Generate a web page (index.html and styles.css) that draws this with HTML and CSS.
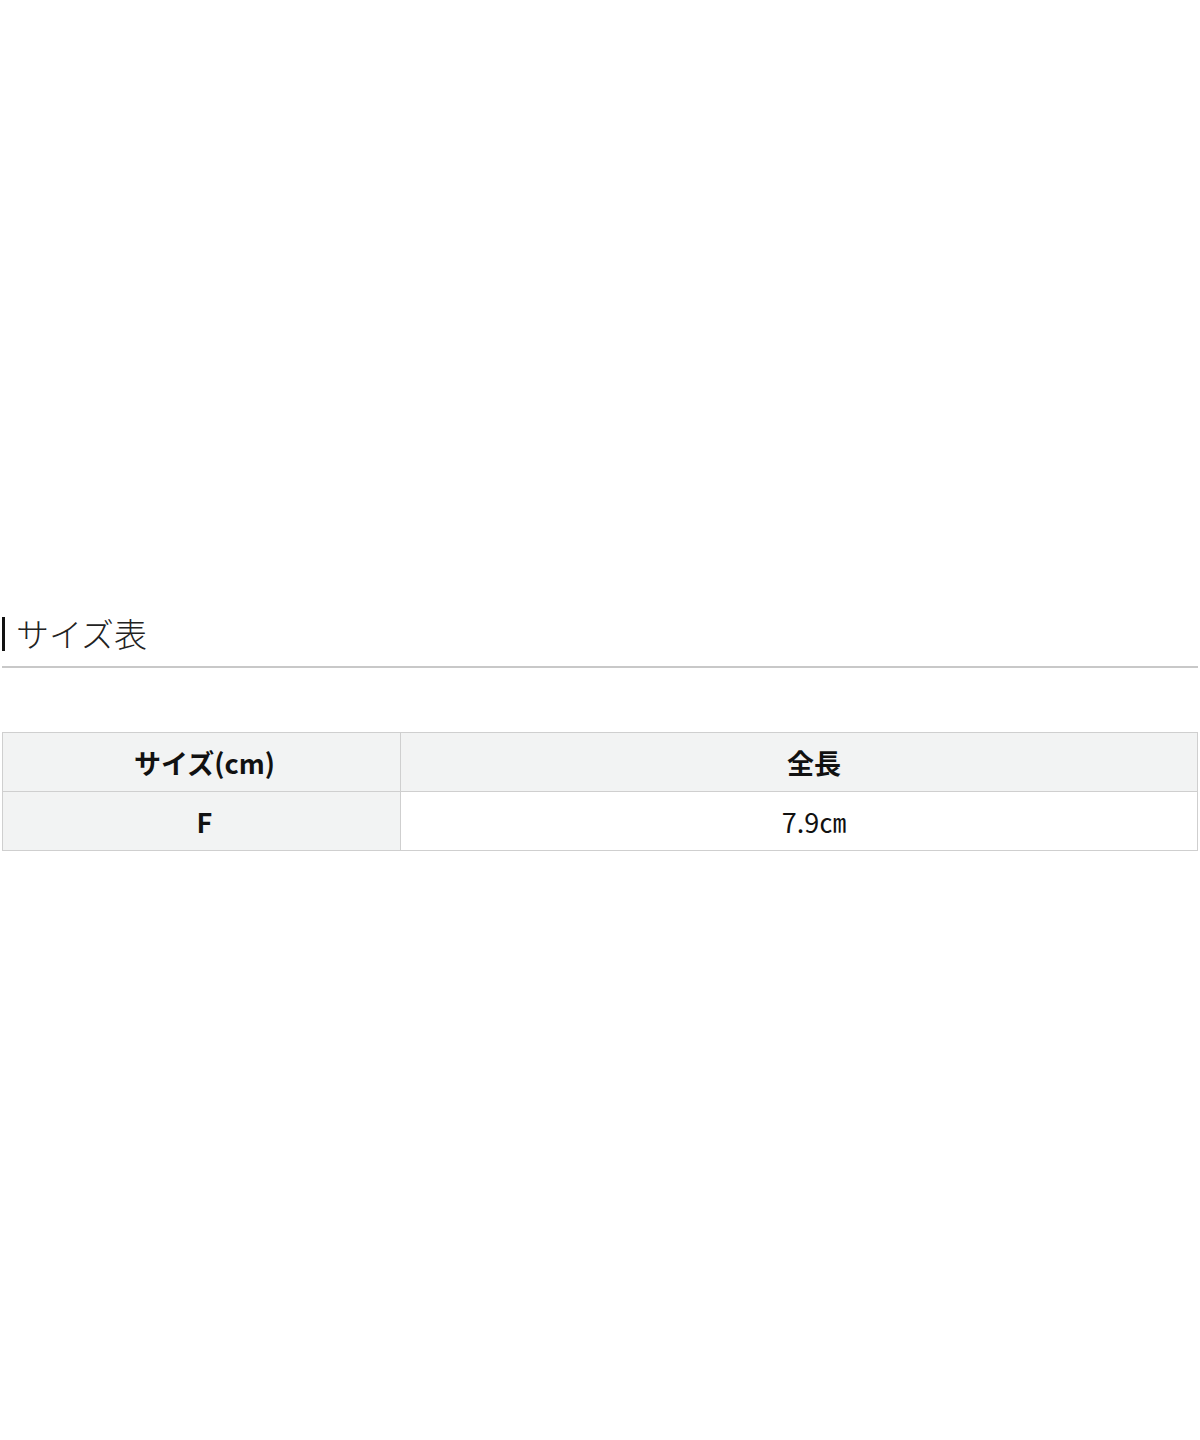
FILE: index.html
```html
<!DOCTYPE html>
<html lang="ja">
<head>
<meta charset="utf-8">
<title>サイズ表</title>
<link rel="stylesheet" href="styles.css">
</head>
<body>
<main class="page">
  <section class="size">
    <h2 class="size-title">サイズ表</h2>
    <table class="size-table">
      <tr>
        <th class="col-head first">サイズ(cm)</th>
        <th class="col-head second">全長</th>
      </tr>
      <tr>
        <th class="row-head first">F</th>
        <td class="cell second">7.9㎝</td>
      </tr>
    </table>
  </section>
</main>
</body>
</html>
```
FILE: styles.css
```css
html, body {
  margin: 0;
  padding: 0;
  background: #fff;
}
.page {
  width: 1200px;
  height: 1440px;
  box-sizing: border-box;
  padding: 611px 2px 0 2px;
  font-family: "Noto Sans CJK JP", "Noto Sans", sans-serif;
}
.size-title {
  margin: 0;
  font-size: 33px;
  font-weight: 300;
  color: #222;
  line-height: 44px;
  padding: 0 0 11px 14px;
  border-bottom: 2px solid #c8c8c8;
  position: relative;
}
.size-title::before {
  content: "";
  position: absolute;
  left: 0;
  top: 6px;
  width: 3px;
  height: 34px;
  background: #111;
}
.size-table {
  margin-top: 64px;
  width: 1196px;
  border-collapse: collapse;
  table-layout: fixed;
  font-family: "Noto Sans CJK JP", sans-serif;
}
.size-table th, .size-table td {
  border: 1px solid #cfcfcf;
  height: 58px;
  padding: 0;
  text-align: center;
  vertical-align: middle;
  color: #111;
}
.size-table .first {
  width: 391px;
  padding-left: 6px;
}
.size-table .second {
  padding-left: 30px;
}
.col-head {
  background: #f2f3f3;
  font-size: 27px;
  font-weight: 700;
}
.row-head {
  background: #f2f3f3;
  font-size: 27px;
  font-weight: 700;
}
.cell {
  background: #fff;
  font-size: 27px;
  font-weight: 400;
  color: #222;
}
```
